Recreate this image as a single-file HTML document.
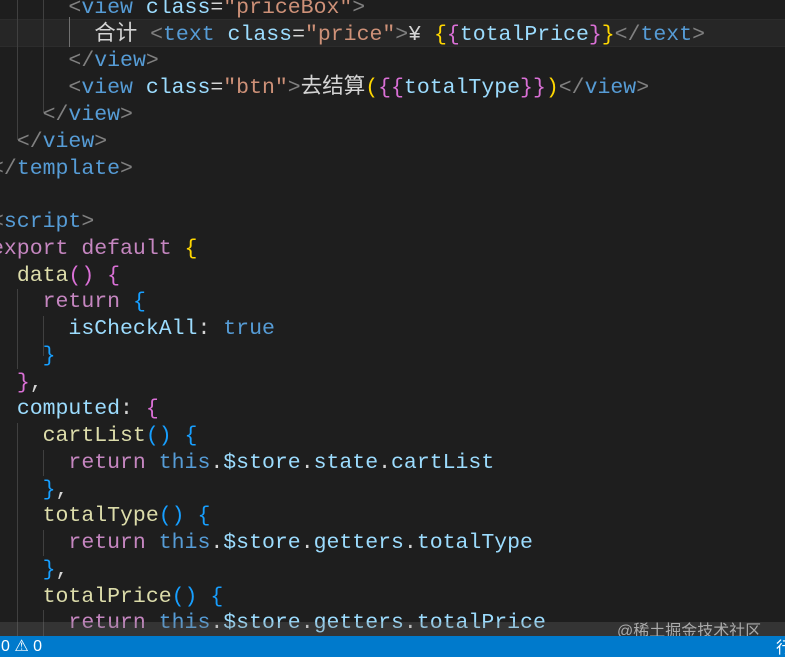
<!DOCTYPE html>
<html><head><meta charset="utf-8"><style>
html,body{margin:0;padding:0;background:#1e1e1e;width:785px;height:657px;overflow:hidden;position:relative}
.l{position:absolute;left:-9px;white-space:pre;font-family:"Liberation Mono","Noto Sans CJK SC",monospace;font-size:21.5px;line-height:26.75px;height:26.75px;color:#d4d4d4}
.g{color:#808080}.t{color:#569cd6}.a{color:#9cdcfe}.s{color:#ce9178}.k{color:#c586c0}.f{color:#dcdcaa}
.y{color:#ffd700}.p{color:#da70d6}.b{color:#179fff}.c{color:#4ec9b0}
.guide{position:absolute;width:1px;background:#404040}
#cur{position:absolute;left:0;top:19px;width:785px;height:26px;background:#262626;border-top:1px solid #2c2c2c;border-bottom:1px solid #2c2c2c}
#peek{position:absolute;left:0;top:622px;width:785px;height:14px;background:rgba(120,120,120,0.25)}
#status{position:absolute;left:0;top:636px;width:785px;height:21px;background:#007acc;color:#fff;font-family:"Liberation Sans",sans-serif;font-size:16px;line-height:21px}
#wm{position:absolute;left:617px;top:617px;color:#aaa;font-family:"Liberation Sans","Noto Sans CJK SC",sans-serif;font-size:16px}
</style></head><body>
<div id="cur"></div>
<div class="guide" style="left:17px;top:0;height:140px"></div>
<div class="guide" style="left:43px;top:0;height:113px"></div>
<div class="guide" style="left:69px;top:17px;height:30px;background:#707070"></div>
<div class="guide" style="left:17px;top:289px;height:80px"></div>
<div class="guide" style="left:43px;top:316px;height:40px"></div>
<div class="guide" style="left:17px;top:423px;height:213px"></div>
<div class="guide" style="left:43px;top:450px;height:26px"></div>
<div class="guide" style="left:43px;top:530px;height:26px"></div>
<div class="guide" style="left:43px;top:610px;height:26px"></div>

<div class="l" style="top:-5px">      <span class="g">&lt;</span><span class="t">view</span> <span class="a">class</span>=<span class="s">"priceBox"</span><span class="g">&gt;</span></div>
<div class="l" style="top:22px">        合计 <span class="g">&lt;</span><span class="t">text</span> <span class="a">class</span>=<span class="s">"price"</span><span class="g">&gt;</span>¥ <span class="y">{</span><span class="p">{</span><span class="a">totalPrice</span><span class="p">}</span><span class="y">}</span><span class="g">&lt;/</span><span class="t">text</span><span class="g">&gt;</span></div>
<div class="l" style="top:48px">      <span class="g">&lt;/</span><span class="t">view</span><span class="g">&gt;</span></div>
<div class="l" style="top:75px">      <span class="g">&lt;</span><span class="t">view</span> <span class="a">class</span>=<span class="s">"btn"</span><span class="g">&gt;</span>去结算<span class="y">(</span><span class="p">{{</span><span class="a">totalType</span><span class="p">}}</span><span class="y">)</span><span class="g">&lt;/</span><span class="t">view</span><span class="g">&gt;</span></div>
<div class="l" style="top:102px">    <span class="g">&lt;/</span><span class="t">view</span><span class="g">&gt;</span></div>
<div class="l" style="top:129px">  <span class="g">&lt;/</span><span class="t">view</span><span class="g">&gt;</span></div>
<div class="l" style="top:156px"><span class="g">&lt;/</span><span class="t">template</span><span class="g">&gt;</span></div>
<div class="l" style="top:209px"><span class="g">&lt;</span><span class="t">script</span><span class="g">&gt;</span></div>
<div class="l" style="top:236px"><span class="k">export default</span> <span class="y">{</span></div>
<div class="l" style="top:263px">  <span class="f">data</span><span class="p">()</span> <span class="p">{</span></div>
<div class="l" style="top:289px">    <span class="k">return</span> <span class="b">{</span></div>
<div class="l" style="top:316px">      <span class="a">isCheckAll</span>: <span class="t">true</span></div>
<div class="l" style="top:343px">    <span class="b">}</span></div>
<div class="l" style="top:370px">  <span class="p">}</span>,</div>
<div class="l" style="top:396px">  <span class="a">computed</span>: <span class="p">{</span></div>
<div class="l" style="top:423px">    <span class="f">cartList</span><span class="b">()</span> <span class="b">{</span></div>
<div class="l" style="top:450px">      <span class="k">return</span> <span class="t">this</span>.<span class="a">$store</span>.<span class="a">state</span>.<span class="a">cartList</span></div>
<div class="l" style="top:477px">    <span class="b">}</span>,</div>
<div class="l" style="top:503px">    <span class="f">totalType</span><span class="b">()</span> <span class="b">{</span></div>
<div class="l" style="top:530px">      <span class="k">return</span> <span class="t">this</span>.<span class="a">$store</span>.<span class="a">getters</span>.<span class="a">totalType</span></div>
<div class="l" style="top:557px">    <span class="b">}</span>,</div>
<div class="l" style="top:584px">    <span class="f">totalPrice</span><span class="b">()</span> <span class="b">{</span></div>
<div class="l" style="top:610px">      <span class="k">return</span> <span class="t">this</span>.<span class="a">$store</span>.<span class="a">getters</span>.<span class="a">totalPrice</span></div>
<div id="peek"></div>
<div id="wm">@稀土掘金技术社区</div>
<div id="status"><span style="position:absolute;left:1px">0 ⚠ 0</span><span style="position:absolute;left:776px;font-family:'Noto Sans CJK SC',sans-serif">行</span></div>
</body></html>
